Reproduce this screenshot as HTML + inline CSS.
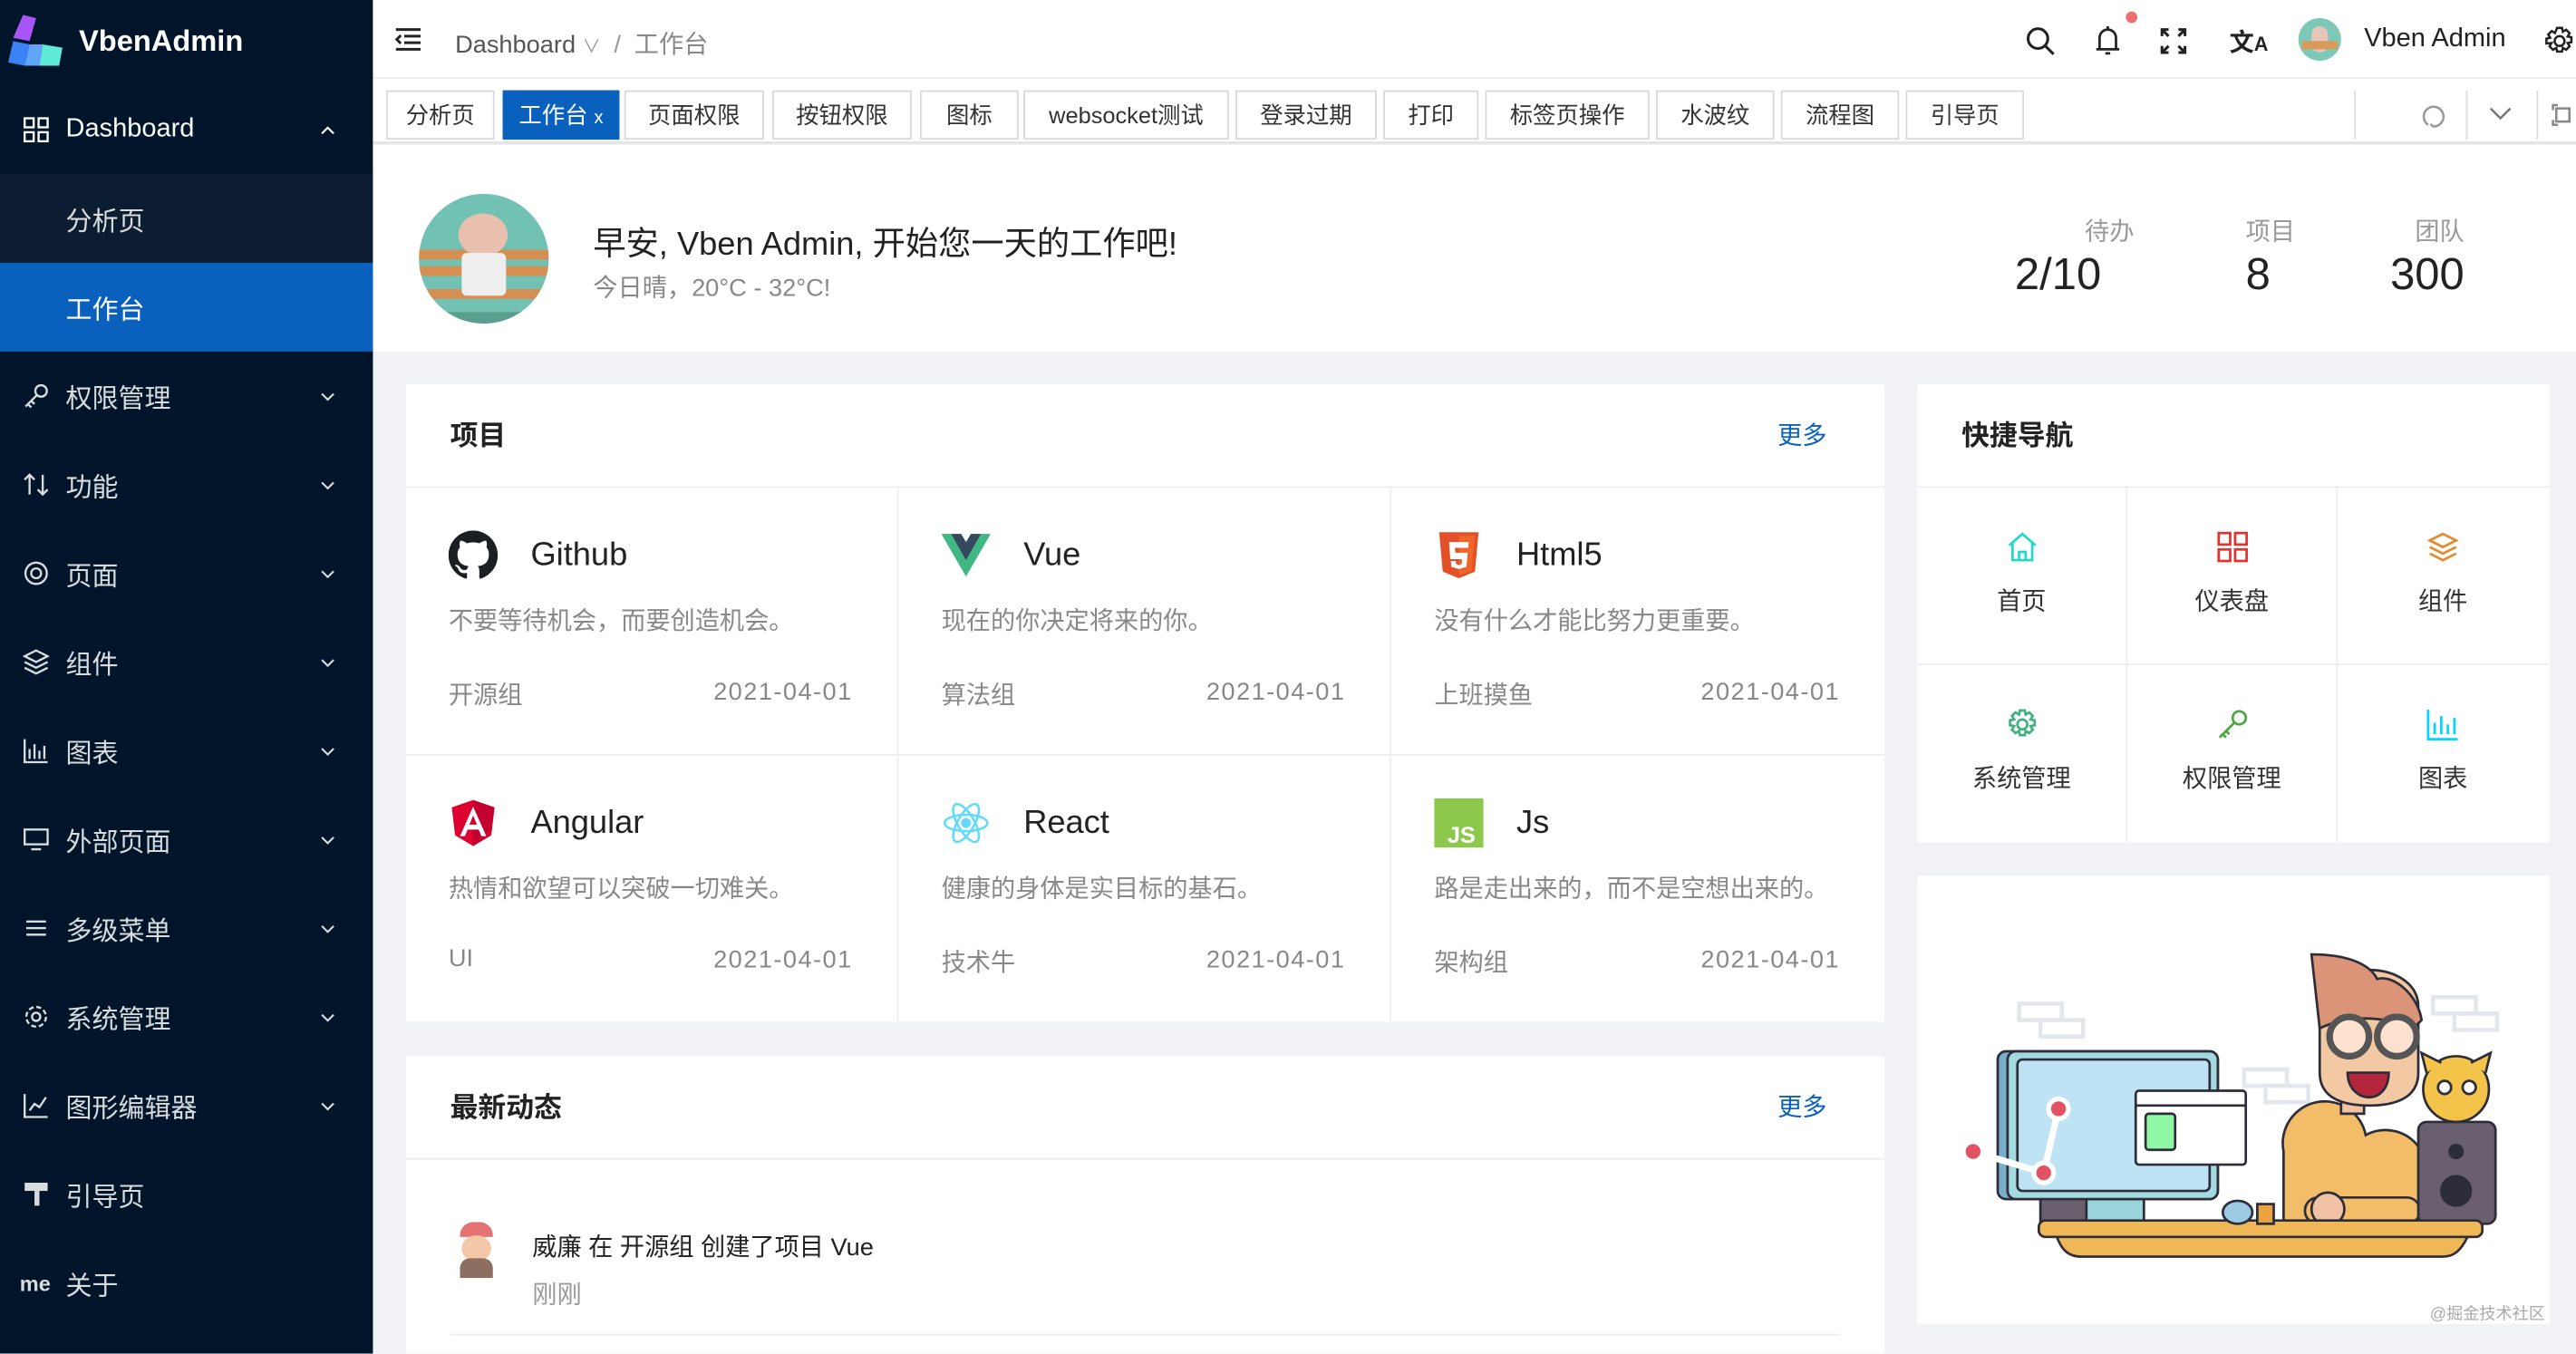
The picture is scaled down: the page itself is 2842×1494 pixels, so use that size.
<!DOCTYPE html>
<html><head><meta charset="utf-8">
<style>
*{box-sizing:border-box;margin:0;padding:0}
html,body{width:2842px;height:1494px;overflow:hidden;background:#f0f2f5}
body{font-family:"Liberation Sans","Noto Sans CJK SC",sans-serif;position:relative}
#clip{position:absolute;left:0;top:0;width:2842px;height:1494px;overflow:hidden}
#root{position:absolute;left:0;top:0;width:1568px;height:824px;overflow:hidden;transform:scale(1.8125);transform-origin:0 0;background:#f0f2f5;color:#333}
.abs{position:absolute}
.side{left:0;top:0;width:227px;height:824px;background:#001529}
.mi{position:absolute;left:0;width:227px;height:54px;display:flex;align-items:center;color:#fff;opacity:.85;font-size:16px}
.mi svg{position:absolute;left:14px;width:16px;height:16px}
.mi .t{position:absolute;left:40px}
.mi .ar{position:absolute;left:195px;width:9px;height:9px}
.hdr{left:227px;top:0;width:1341px;height:48px;background:#fff;border-bottom:1px solid #eee}
.tabs{left:227px;top:48px;width:1341px;height:40px;background:#fff;border-bottom:2px solid #e5e5e5}
.tab{position:absolute;top:7px;height:30px;border:1px solid #d9d9d9;font-size:14px;line-height:28px;text-align:center;color:#333;background:#fff}
.card{position:absolute;background:#fff}
.ch{height:63px;border-bottom:1px solid #eee;padding-left:27px;font-size:17px;font-weight:bold;line-height:63px;color:#222;position:relative}
.more{position:absolute;right:35px;top:0;font-size:15px;font-weight:normal;color:#0960bd}
.pc{position:absolute;width:300px;height:163px;border-right:1px solid #eee;border-bottom:1px solid #eee}
.pc .ic{position:absolute;left:26px;top:26px;width:30px;height:30px}
.pc .nm{position:absolute;left:76px;top:30px;font-size:20px;color:#222}
.pc .ds{position:absolute;left:26px;top:70px;font-size:15px;color:#888}
.pc .g{position:absolute;left:26px;top:115px;font-size:15px;color:#888}
.pc .d{position:absolute;right:27px;top:116px;font-size:15px;color:#888;letter-spacing:.8px}
.qn{position:absolute;width:128px;height:108px;border-right:1px solid #eee;border-bottom:1px solid #eee;text-align:center}
.qn svg{position:absolute;left:54px;top:26px;width:20px;height:20px}
.qn span{position:absolute;left:0;right:0;top:58px;font-size:15px;color:#333}
</style></head><body><div id="clip"><div id="root">

<!-- sidebar -->
<div class="abs side">
 <svg class="abs" style="left:4px;top:9px" width="36" height="32" viewBox="0 0 36 32">
  <polygon points="10,0 18,2 14,16 4,14" fill="#a855f7"/>
  <polygon points="4,16 14,18 11,31 1,29" fill="#3b82f6"/>
  <polygon points="14,18 22,18 20,31 11,31" fill="#60a5fa"/>
  <polygon points="22,18 34,20 32,31 20,31" fill="#5eead4"/>
 </svg>
 <div class="abs" style="left:48px;top:15px;color:#fff;font-size:18px;font-weight:bold">VbenAdmin</div>
 <div class="mi" style="top:52px;opacity:1"><svg viewBox="0 0 16 16" fill="none" stroke="#fff" stroke-width="1.3"><rect x="1" y="1" width="5.5" height="5.5"/><rect x="9.5" y="1" width="5.5" height="5.5"/><rect x="1" y="9.5" width="5.5" height="5.5"/><rect x="9.5" y="9.5" width="5.5" height="5.5"/></svg><span class="t">Dashboard</span><svg class="ar" viewBox="0 0 10 10"><path d="M1 7 L5 3 L9 7" stroke="#fff" stroke-width="1.3" fill="none"/></svg></div>
 <div class="mi" style="top:106px;background:#0f1f33"><span class="t">分析页</span></div>
 <div class="mi" style="top:160px;background:#0960bd;opacity:1"><span class="t">工作台</span></div>
 <div class="mi" style="top:214px"><svg viewBox="0 0 16 16" fill="none" stroke="#fff" stroke-width="1.3"><circle cx="11" cy="5" r="3.5"/><path d="M8.5 7.5 L1.5 14.5 M3 13 L5 15 M5 11 L7 13"/></svg><span class="t">权限管理</span><svg class="ar" viewBox="0 0 10 10"><path d="M1 3 L5 7 L9 3" stroke="#fff" stroke-width="1.3" fill="none"/></svg></div>
 <div class="mi" style="top:268px"><svg viewBox="0 0 16 16" fill="none" stroke="#fff" stroke-width="1.3"><path d="M4 2v12M1 5l3-3 3 3M12 14V2M9 11l3 3 3-3"/></svg><span class="t">功能</span><svg class="ar" viewBox="0 0 10 10"><path d="M1 3 L5 7 L9 3" stroke="#fff" stroke-width="1.3" fill="none"/></svg></div>
 <div class="mi" style="top:322px"><svg viewBox="0 0 16 16" fill="none" stroke="#fff" stroke-width="1.3"><circle cx="8" cy="8" r="6.5"/><circle cx="8" cy="8" r="3"/></svg><span class="t">页面</span><svg class="ar" viewBox="0 0 10 10"><path d="M1 3 L5 7 L9 3" stroke="#fff" stroke-width="1.3" fill="none"/></svg></div>
 <div class="mi" style="top:376px"><svg viewBox="0 0 16 16" fill="none" stroke="#fff" stroke-width="1.3"><path d="M8 1 L15 4.5 L8 8 L1 4.5Z M1 8 L8 11.5 L15 8 M1 11.5 L8 15 L15 11.5"/></svg><span class="t">组件</span><svg class="ar" viewBox="0 0 10 10"><path d="M1 3 L5 7 L9 3" stroke="#fff" stroke-width="1.3" fill="none"/></svg></div>
 <div class="mi" style="top:430px"><svg viewBox="0 0 16 16" fill="none" stroke="#fff" stroke-width="1.3"><path d="M1 1v14h14M4 13V7M7 13V4M10 13V8M13 13V5"/></svg><span class="t">图表</span><svg class="ar" viewBox="0 0 10 10"><path d="M1 3 L5 7 L9 3" stroke="#fff" stroke-width="1.3" fill="none"/></svg></div>
 <div class="mi" style="top:484px"><svg viewBox="0 0 16 16" fill="none" stroke="#fff" stroke-width="1.3"><rect x="1" y="2" width="14" height="9"/><path d="M5 14h6"/></svg><span class="t">外部页面</span><svg class="ar" viewBox="0 0 10 10"><path d="M1 3 L5 7 L9 3" stroke="#fff" stroke-width="1.3" fill="none"/></svg></div>
 <div class="mi" style="top:538px"><svg viewBox="0 0 16 16" fill="none" stroke="#fff" stroke-width="1.3"><path d="M2 4h12M2 8h12M2 12h12"/></svg><span class="t">多级菜单</span><svg class="ar" viewBox="0 0 10 10"><path d="M1 3 L5 7 L9 3" stroke="#fff" stroke-width="1.3" fill="none"/></svg></div>
 <div class="mi" style="top:592px"><svg viewBox="0 0 16 16" fill="none" stroke="#fff" stroke-width="1.3"><circle cx="8" cy="8" r="2.5"/><circle cx="8" cy="8" r="6" stroke-dasharray="3 1.7"/></svg><span class="t">系统管理</span><svg class="ar" viewBox="0 0 10 10"><path d="M1 3 L5 7 L9 3" stroke="#fff" stroke-width="1.3" fill="none"/></svg></div>
 <div class="mi" style="top:646px"><svg viewBox="0 0 16 16" fill="none" stroke="#fff" stroke-width="1.3"><path d="M1 1v14h14M4 11l3-4 3 2 4-6"/></svg><span class="t">图形编辑器</span><svg class="ar" viewBox="0 0 10 10"><path d="M1 3 L5 7 L9 3" stroke="#fff" stroke-width="1.3" fill="none"/></svg></div>
 <div class="mi" style="top:700px"><svg viewBox="0 0 16 16" fill="#fff"><rect x="1" y="1" width="14" height="5"/><rect x="7" y="6" width="3" height="9"/></svg><span class="t">引导页</span></div>
 <div class="mi" style="top:754px"><span style="position:absolute;left:12px;font-size:13px;font-weight:bold">me</span><span class="t">关于</span></div>
</div>

<!-- header -->
<div class="abs hdr">
 <svg class="abs" style="left:13px;top:17px" width="16" height="14" viewBox="0 0 16 14" fill="none" stroke="#222" stroke-width="1.6"><path d="M1 1h15M6 5h10M6 9h10M1 13h15M4 4.5L1.5 7 4 9.5"/></svg>
 <div class="abs" style="left:50px;top:16px;font-size:15px;color:#555">Dashboard <span style="font-size:11px;color:#999">∨</span> <span style="color:#999;margin:0 4px">/</span> <span style="color:#888">工作台</span></div>
 <svg class="abs" style="left:1006px;top:16px" width="18" height="18" viewBox="0 0 18 18" fill="none" stroke="#222" stroke-width="1.7"><circle cx="7.5" cy="7.5" r="6"/><path d="M12 12l5 5"/></svg>
 <svg class="abs" style="left:1048px;top:15px" width="16" height="19" viewBox="0 0 16 19" fill="none" stroke="#222" stroke-width="1.5"><path d="M3 15V8a5 5 0 0110 0v7zM1 15h14M6.5 17.5h3M8 1v2"/></svg>
 <div class="abs" style="left:1067px;top:7px;width:7px;height:7px;border-radius:50%;background:#ed6f6f"></div>
 <svg class="abs" style="left:1088px;top:17px" width="16" height="16" viewBox="0 0 16 16" fill="none" stroke="#222" stroke-width="1.7"><path d="M1 5V1h4M11 1h4v4M15 11v4h-4M5 15H1v-4M1 1l4 4M15 1l-4 4M15 15l-4-4M1 15l4-4"/></svg>
 <div class="abs" style="left:1130px;top:15px;font-size:15px;font-weight:bold;color:#222">文<span style="font-size:12px">A</span></div>
 <div class="abs" style="left:1172px;top:11px;width:26px;height:26px;border-radius:50%;background:#7ec8b8;overflow:hidden"><div style="position:absolute;left:8px;top:5px;width:10px;height:16px;background:#e8c5b8;border-radius:5px"></div><div style="position:absolute;left:2px;top:14px;width:22px;height:5px;background:#d99a5c"></div></div>
 <div class="abs" style="left:1212px;top:15px;font-size:16px;color:#222">Vben Admin</div>
 <svg class="abs" style="left:1322px;top:16px" width="18" height="18" viewBox="0 0 18 18" fill="none" stroke="#222" stroke-width="1.4"><circle cx="9" cy="9" r="3"/><path d="M7.5 1h3l.5 2.3 2-1.2 2.1 2.1-1.2 2 2.3.5v3l-2.3.5 1.2 2-2.1 2.1-2-1.2-.5 2.3h-3l-.5-2.3-2 1.2-2.1-2.1 1.2-2L1 10.5v-3l2.3-.5-1.2-2 2.1-2.1 2 1.2z"/></svg>
</div>

<!-- tabs -->
<div class="abs tabs">
 <div class="tab" style="left:8px;width:66px">分析页</div>
 <div class="tab" style="left:79px;width:71px;background:#0960bd;border-color:#0960bd;color:#fff">工作台 <span style="font-size:11px">x</span></div>
 <div class="tab" style="left:153px;width:85px">页面权限</div>
 <div class="tab" style="left:243px;width:85px">按钮权限</div>
 <div class="tab" style="left:333px;width:60px">图标</div>
 <div class="tab" style="left:396px;width:125px">websocket测试</div>
 <div class="tab" style="left:525px;width:86px">登录过期</div>
 <div class="tab" style="left:615px;width:58px">打印</div>
 <div class="tab" style="left:677px;width:100px">标签页操作</div>
 <div class="tab" style="left:781px;width:72px">水波纹</div>
 <div class="tab" style="left:857px;width:72px">流程图</div>
 <div class="tab" style="left:933px;width:72px">引导页</div>
 <div class="abs" style="left:1206px;top:7px;width:1px;height:30px;background:#ddd"></div>
 <div class="abs" style="left:1274px;top:7px;width:1px;height:30px;background:#ddd"></div>
 <div class="abs" style="left:1317px;top:7px;width:1px;height:30px;background:#ddd"></div>
 <svg class="abs" style="left:1247px;top:15px" width="14" height="15" viewBox="0 0 14 15" fill="none" stroke="#999" stroke-width="1.4"><path d="M4 13A6 6 0 117 14M7 14l-1.5-1.5"/></svg>
 <svg class="abs" style="left:1288px;top:17px" width="14" height="9" viewBox="0 0 14 9" fill="none" stroke="#777" stroke-width="1.4"><path d="M1 1l6 6 6-6"/></svg>
 <svg class="abs" style="left:1326px;top:15px" width="14" height="14" viewBox="0 0 14 14" fill="none" stroke="#888" stroke-width="1.4"><rect x="3" y="3" width="8" height="8"/><path d="M1 4V1h3M1 10v3h3"/></svg>
</div>

<!-- welcome -->
<div class="abs" style="left:227px;top:88px;width:1341px;height:126px;background:#fff">
 <div class="abs" style="left:28px;top:30px;width:79px;height:79px;border-radius:50%;background:#72c2b3;overflow:hidden">
  <div style="position:absolute;left:0;top:34px;width:79px;height:6px;background:#d58f52"></div>
  <div style="position:absolute;left:0;top:44px;width:79px;height:6px;background:#d58f52"></div>
  <div style="position:absolute;left:0;top:58px;width:79px;height:6px;background:#d58f52"></div>
  <div style="position:absolute;left:24px;top:12px;width:30px;height:26px;border-radius:50%;background:#e9c0b0"></div>
  <div style="position:absolute;left:26px;top:36px;width:27px;height:26px;background:#eee;border-radius:3px"></div>
  <div style="position:absolute;left:0;top:72px;width:79px;height:8px;background:#5a9e8e"></div>
 </div>
 <div class="abs" style="left:134px;top:44px;font-size:20px;color:#222">早安, Vben Admin, 开始您一天的工作吧!</div>
 <div class="abs" style="left:134px;top:76px;font-size:15px;color:#888">今日晴，20°C - 32°C!</div>
 <div class="abs" style="left:1000px;top:42px;width:72px;text-align:right;font-size:15px;color:#999">待办</div>
 <div class="abs" style="left:990px;top:64px;width:62px;text-align:right;font-size:27px;color:#222">2/10</div>
 <div class="abs" style="left:1110px;top:42px;width:60px;text-align:right;font-size:15px;color:#999">项目</div>
 <div class="abs" style="left:1110px;top:64px;width:45px;text-align:right;font-size:27px;color:#222">8</div>
 <div class="abs" style="left:1210px;top:42px;width:63px;text-align:right;font-size:15px;color:#999">团队</div>
 <div class="abs" style="left:1210px;top:64px;width:63px;text-align:right;font-size:27px;color:#222">300</div>
</div>

<!-- projects -->
<div class="card" style="left:247px;top:234px;width:900px;height:388px">
 <div class="ch">项目<span class="more">更多</span></div>
 <div class="pc" style="left:0;top:63px">
  <svg class="ic" viewBox="0 0 16 16"><path fill="#1b1f23" d="M8 0C3.58 0 0 3.58 0 8c0 3.54 2.29 6.530 5.47 7.59.4.07.55-.17.55-.38 0-.19-.01-.82-.01-1.49-2.01.37-2.53-.49-2.690-.94-.09-.23-.48-.94-.82-1.13-.28-.15-.68-.52-.01-.53.63-.01 1.08.58 1.23.82.72 1.21 1.870.87 2.33.66.07-.52.28-.87.51-1.07-1.78-.2-3.64-.89-3.64-3.95 0-.87.31-1.59.82-2.15-.08-.2-.36-1.02.08-2.12 0 0 .67-.21 2.2.82.64-.18 1.32-.27 2-.27.68 0 1.36.09 2 .27 1.53-1.04 2.2-.82 2.2-.82.44 1.1.16 1.92.08 2.12.51.56.82 1.27.82 2.15 0 3.07-1.87 3.75-3.65 3.95.29.25.54.73.54 1.48 0 1.07-.01 1.93-.01 2.2 0 .21.15.46.55.38A8.013 8.013 0 0016 8c0-4.42-3.58-8-8-8z"/></svg>
  <div class="nm">Github</div><div class="ds">不要等待机会，而要创造机会。</div><div class="g">开源组</div><div class="d">2021-04-01</div></div>
 <div class="pc" style="left:300px;top:63px">
  <svg class="ic" viewBox="0 0 30 30"><path d="M0 2h12l3 5 3-5h12L15 28z" fill="#41b883"/><path d="M6 2h6l3 5 3-5h6L15 18z" fill="#34495e"/></svg>
  <div class="nm">Vue</div><div class="ds">现在的你决定将来的你。</div><div class="g">算法组</div><div class="d">2021-04-01</div></div>
 <div class="pc" style="left:600px;top:63px;border-right:none">
  <svg class="ic" viewBox="0 0 30 30"><path d="M3 1h24l-2.2 24L15 29 5.2 25z" fill="#e34f26"/><path d="M15 3v24l7.8-2.3L24.7 3z" fill="#ef652a"/><path d="M9 7h12l-.3 3.5H12.6l.3 3H20.4l-.8 8.5L15 23.5 10.4 22l-.3-3.5h3l.2 1.8L15 21l1.8-.6.2-3H9.8z" fill="#fff"/></svg>
  <div class="nm">Html5</div><div class="ds">没有什么才能比努力更重要。</div><div class="g">上班摸鱼</div><div class="d">2021-04-01</div></div>
 <div class="pc" style="left:0;top:226px;border-bottom:none">
  <svg class="ic" viewBox="0 0 30 30"><path d="M15 1L2 5.5l2 17L15 29l11-6.5 2-17z" fill="#dd0031"/><path d="M15 1v28l11-6.5 2-17z" fill="#c3002f"/><path d="M15 5L7 23h3l1.6-4h6.8l1.6 4h3zm-2.3 11L15 10.5 17.3 16z" fill="#fff"/></svg>
  <div class="nm">Angular</div><div class="ds">热情和欲望可以突破一切难关。</div><div class="g">UI</div><div class="d">2021-04-01</div></div>
 <div class="pc" style="left:300px;top:226px;border-bottom:none">
  <svg class="ic" viewBox="0 0 30 30" fill="none" stroke="#61dafb" stroke-width="1.4"><ellipse cx="15" cy="15" rx="13" ry="5"/><ellipse cx="15" cy="15" rx="13" ry="5" transform="rotate(60 15 15)"/><ellipse cx="15" cy="15" rx="13" ry="5" transform="rotate(120 15 15)"/><circle cx="15" cy="15" r="2.3" fill="#61dafb"/></svg>
  <div class="nm">React</div><div class="ds">健康的身体是实目标的基石。</div><div class="g">技术牛</div><div class="d">2021-04-01</div></div>
 <div class="pc" style="left:600px;top:226px;border:none">
  <svg class="ic" viewBox="0 0 30 30"><rect width="30" height="30" fill="#8cc84b"/><text x="8" y="27" font-family="Liberation Sans" font-weight="bold" font-size="14" fill="#fff">JS</text></svg>
  <div class="nm">Js</div><div class="ds">路是走出来的，而不是空想出来的。</div><div class="g">架构组</div><div class="d">2021-04-01</div></div>
</div>

<!-- latest -->
<div class="card" style="left:247px;top:643px;width:900px;height:181px">
 <div class="ch">最新动态<span class="more">更多</span></div>
 <div class="abs" style="left:30px;top:101px;width:26px;height:34px">
  <div style="position:absolute;left:3px;top:0;width:20px;height:9px;background:#e57373;border-radius:8px 8px 0 0"></div>
  <div style="position:absolute;left:4px;top:8px;width:18px;height:16px;background:#f3c7a8;border-radius:50%"></div>
  <div style="position:absolute;left:3px;top:22px;width:20px;height:12px;background:#8d6e63;border-radius:6px 6px 0 0"></div>
 </div>
 <div class="abs" style="left:77px;top:105px;font-size:15px;color:#222">威廉 在 开源组 创建了项目 Vue</div>
 <div class="abs" style="left:77px;top:134px;font-size:15px;color:#999">刚刚</div>
 <div class="abs" style="left:27px;top:169px;width:846px;height:1px;background:#eee"></div>
</div>

<!-- quick nav -->
<div class="card" style="left:1167px;top:234px;width:385px;height:279px">
 <div class="ch">快捷导航</div>
 <div class="qn" style="left:0;top:63px"><svg viewBox="0 0 20 20" fill="none" stroke="#1fdaca" stroke-width="1.5"><path d="M2 9L10 2l8 7M4 7.5V18h12V7.5M8 18v-5h4v5"/></svg><span>首页</span></div>
 <div class="qn" style="left:128px;top:63px"><svg viewBox="0 0 20 20" fill="none" stroke="#e3312e" stroke-width="1.5"><rect x="1.5" y="1.5" width="7" height="7"/><rect x="11.5" y="1.5" width="7" height="7"/><rect x="1.5" y="11.5" width="7" height="7"/><rect x="11.5" y="11.5" width="7" height="7"/></svg><span>仪表盘</span></div>
 <div class="qn" style="left:256px;top:63px;border-right:none"><svg viewBox="0 0 20 20" fill="none" stroke="#e48a2c" stroke-width="1.5"><path d="M10 2l8 4-8 4-8-4z M2 10l8 4 8-4 M2 14l8 4 8-4"/></svg><span>组件</span></div>
 <div class="qn" style="left:0;top:171px;border-bottom:none"><svg viewBox="0 0 20 20" fill="none" stroke="#3fb27f" stroke-width="1.5"><circle cx="10" cy="10" r="3"/><path d="M8.5 1.5h3l.5 2.5 2.2-1.3 2.1 2.1-1.3 2.2 2.5.5v3l-2.5.5 1.3 2.2-2.1 2.1-2.2-1.3-.5 2.5h-3l-.5-2.5-2.2 1.3-2.1-2.1 1.3-2.2-2.5-.5v-3l2.5-.5-1.3-2.2 2.1-2.1 2.2 1.3z"/></svg><span>系统管理</span></div>
 <div class="qn" style="left:128px;top:171px;border-bottom:none"><svg viewBox="0 0 20 20" fill="none" stroke="#4da73c" stroke-width="1.5"><circle cx="14" cy="6" r="4"/><path d="M11 9l-9 9M4 16l2 2M6 14l2 2"/></svg><span>权限管理</span></div>
 <div class="qn" style="left:256px;top:171px;border:none"><svg viewBox="0 0 20 20" fill="none" stroke="#00d8ff" stroke-width="1.5"><path d="M1 1v18h18M5 16V9M9 16V5M13 16V10M17 16V6"/></svg><span>图表</span></div>
</div>

<!-- illustration -->
<div class="card" style="left:1167px;top:533px;width:385px;height:273px">
 <svg class="abs" style="left:0;top:0" width="385" height="273" viewBox="0 0 385 273">
  <g fill="none" stroke="#e3e6ea" stroke-width="2.5">
   <rect x="62" y="78" width="26" height="10"/><rect x="75" y="88" width="26" height="10"/>
   <rect x="314" y="74" width="26" height="10"/><rect x="327" y="84" width="26" height="10"/>
   <rect x="199" y="118" width="26" height="10"/><rect x="212" y="128" width="26" height="10"/>
  </g>
  <g stroke="#2d2d3a" stroke-width="1.5">
   <rect x="75" y="190" width="40" height="22" fill="#6a5f6e"/>
   <rect x="103" y="195" width="35" height="17" fill="#9ad5dc"/>
   <rect x="49" y="107" width="134" height="90" rx="5" fill="#79aecb"/>
   <rect x="55" y="107" width="128" height="90" rx="5" fill="#a2dae0"/>
   <rect x="61" y="112" width="117" height="80" rx="3" fill="#bde3f5"/>
   <rect x="133" y="131" width="67" height="45" rx="2" fill="#fff"/>
   <line x1="133" y1="140" x2="200" y2="140"/>
   <rect x="139" y="145" width="18" height="22" rx="2" fill="#8ff8a5"/>
   <path d="M34 168L77 181L86 142" fill="none" stroke="#fff" stroke-width="4"/>
   <circle cx="34" cy="168" r="6" fill="#e25262" stroke="#fff" stroke-width="3"/>
   <circle cx="77" cy="181" r="6" fill="#e25262" stroke="#fff" stroke-width="3"/>
   <circle cx="86" cy="142" r="6" fill="#e25262" stroke="#fff" stroke-width="3"/>
   <path d="M223 212V168a25 25 0 0150-10 25 25 0 0134 10v44z" fill="#f2bc69"/>
   <rect x="236" y="196" width="70" height="16" rx="8" fill="#f2bc69"/>
   <circle cx="250" cy="203" r="10" fill="#f1c3a4"/>
   <rect x="305" y="150" width="47" height="62" rx="5" fill="#6a5f6e"/>
   <circle cx="328" cy="192" r="9" fill="#2d2d3a"/>
   <circle cx="328" cy="168" r="4" fill="#2d2d3a"/>
   <ellipse cx="328" cy="130" rx="20" ry="20" fill="#f3c34a"/>
   <path d="M310 120l-3-12 12 6M346 120l3-12-12 6" fill="#f3c34a"/>
   <circle cx="321" cy="129" r="4" fill="#fff"/><circle cx="336" cy="129" r="4" fill="#fff"/>
   <rect x="258" y="125" width="14" height="20" fill="#f1c3a4"/>
   <path d="M245 80c0-30 60-30 60 0v40c0 16-15 20-30 20s-30-4-30-20z" fill="#f3c9a4"/>
   <path d="M240 48c20 0 35 5 40 15 10-3 25 10 27 25l-5 5c-20-8-40-8-57 0z" fill="#db9478"/>
   <circle cx="263" cy="98" r="12" fill="#fde3cf" stroke="#555" stroke-width="4"/>
   <circle cx="292" cy="98" r="12" fill="#fde3cf" stroke="#555" stroke-width="4"/>
   <path d="M262 120h25c0 10-6 15-12 15s-13-5-13-15z" fill="#b3263b"/>
   <rect x="74" y="210" width="270" height="10" rx="4" fill="#f0b757"/>
   <path d="M85 220h250c-4 8-8 12-15 12H100c-8 0-12-4-15-12z" fill="#f0b757"/>
   <rect x="207" y="200" width="10" height="12" fill="#e9a341"/>
   <ellipse cx="195" cy="205" rx="9" ry="7" fill="#9acae4"/>
  </g>
 </svg>
 <div class="abs" style="left:312px;top:258px;font-size:10px;color:#aaa">@掘金技术社区</div>
</div>

</div></div></body></html>
